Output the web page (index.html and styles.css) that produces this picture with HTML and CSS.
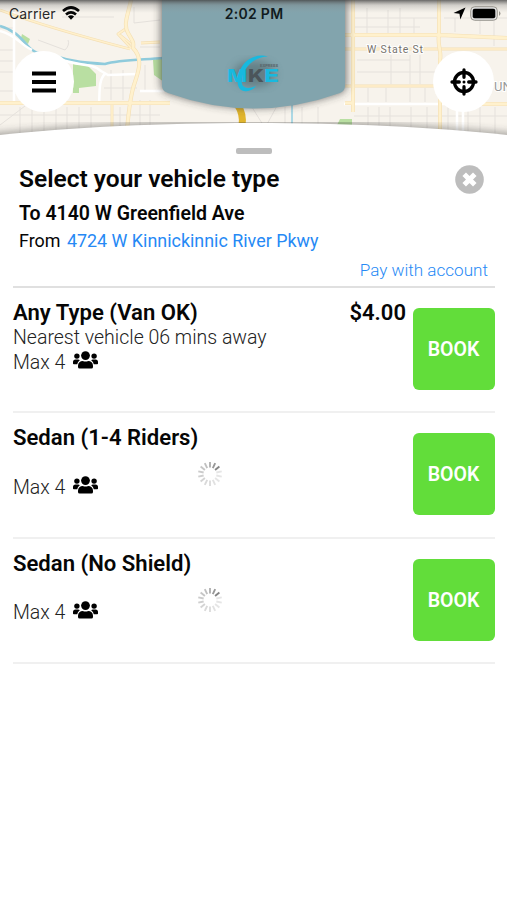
FILE: index.html
```html
<!DOCTYPE html>
<html lang="en">
<head>
<meta charset="utf-8">
<title>Select your vehicle type</title>
<link rel="stylesheet" href="styles.css">
</head>
<body>
<svg class="defs" width="0" height="0" aria-hidden="true">
  <symbol id="users" viewBox="0 0 25 18">
    <circle cx="12.5" cy="4.6" r="4.4"/>
    <circle cx="3.9" cy="5.1" r="2.7"/><circle cx="21.1" cy="5.1" r="2.7"/>
    <path d="M5 16v-1.300a4.800 4.800 0 0 1 4.800-4.800c1.800.9 3.600.9 5.400 0a4.800 4.800 0 0 1 4.800 4.800V16q0 1.600-1.600 1.600H6.600Q5 17.600 5 16z"/>
    <path d="M0 12.400V11a2.500 2.500 0 0 1 2.500-2.500H5c.8 0 1.400.3 1.800.8a6 6 0 0 0-2.600 3.900H.8a.8.8 0 0 1-.8-.8zM25 12.400V11a2.500 2.500 0 0 0-2.500-2.500H20c-.8 0-1.400.3-1.800.8a6 6 0 0 1 2.600 3.900h3.400a.8.8 0 0 0 .8-.8z"/>
  </symbol>
  <symbol id="spinner" viewBox="-13 -13 26 26">
    <g stroke="#555" stroke-width="1.9">
      <path d="M0-6.500V-12" opacity=".45"/>
      <path d="M0-6.500V-12" transform="rotate(25.700)" opacity=".6"/>
      <path d="M0-6.500V-12" transform="rotate(51.400)" opacity=".72"/>
      <path d="M0-6.500V-12" transform="rotate(77.100)" opacity=".15"/>
      <path d="M0-6.500V-12" transform="rotate(102.900)" opacity=".15"/>
      <path d="M0-6.500V-12" transform="rotate(128.600)" opacity=".15"/>
      <path d="M0-6.500V-12" transform="rotate(154.300)" opacity=".17"/>
      <path d="M0-6.500V-12" transform="rotate(180)" opacity=".2"/>
      <path d="M0-6.500V-12" transform="rotate(205.700)" opacity=".22"/>
      <path d="M0-6.500V-12" transform="rotate(231.400)" opacity=".25"/>
      <path d="M0-6.500V-12" transform="rotate(257.100)" opacity=".28"/>
      <path d="M0-6.500V-12" transform="rotate(282.900)" opacity=".3"/>
      <path d="M0-6.500V-12" transform="rotate(308.600)" opacity=".33"/>
      <path d="M0-6.500V-12" transform="rotate(334.300)" opacity=".37"/>
    </g>
  </symbol>
</svg>

<header class="hero">
  <svg class="map" viewBox="0 0 507 138" aria-hidden="true">
    <defs>
      <filter id="soft" x="-20%" y="-20%" width="140%" height="140%"><feGaussianBlur stdDeviation="4"/></filter>
      <linearGradient id="top" x2="0" y2="1"><stop stop-color="#444" stop-opacity=".8"/><stop offset=".4" stop-color="#777" stop-opacity=".3"/><stop offset="1" stop-color="#999" stop-opacity="0"/></linearGradient>
    </defs>
    <rect width="507" height="138" fill="#f7f3ec"/>
    <g fill="none" stroke="#e5e1dc" stroke-width="1">
      <path d="M0 50H15M0 61H15M0 72H15M0 91H15M0 115H160M20 107V138M32 107V138M44 107V138M56 107V138M67 107V138M79 107V138M91 107V138M120 107V138M140 100V138M150 100V138M0 125L25 106M62 17H114M38 40L65 50Q70 45 68 40M134 7V23L160 20M140 47H160M104 88H137M111 70V100M123 70V100M145 65V90M0 28H14V10"/>
      <path d="M355 18H438M355 27H420M367 8V34M388 10V34M400 8V34M414 18V34M444 18H507M455 18V32M480 8V34M494 20V46M357 60H410M391 55V84M410 55V84M420 55V84M357 72H435M368 88V102M386 88V102M410 88V102M425 88V102M368 107V138M379 107V138M390 107V138M411 107V138M427 107V138M448 107V138M468 107V138M480 107V138M495 107V138M354 116H507M250 104L265 128L278 104M285 107V128M302 107V125M318 107V125"/>
    </g>
    <g fill="#b9dfa2">
      <path d="M73 64L88 66L96 74V86L79 88V93H73zM153 60L164 57V82L154 75zM340 119H352V125H337zM22 34l8 5-2 5-7-6z"/>
    </g>
    <g fill="none" stroke-linejoin="round">
      <path d="M0 26C14 30 20 37 27 45S38 54 55 56C72 62 88 63 105 64C118 60 138 60 164 58" stroke="#8fcbdc" stroke-width="2.600"/>
      <path d="M14 12V104M0 31C16 35 21 45 32 50M60 59C80 67 91 62 101 71L108 75L137 74M105 74C98 80 100 95 99 104M140 91H164M344 104H507M457 105V138M463 105V138" stroke="#fff" stroke-width="2.500"/>
      <g>
        <path d="M0 10C35 23 72 34 130 49M131 48L118 34L127 28M120 35L131 44M141 43L160 42M112 104V130M345 49H507M345 86H435" stroke="#f4dfb4" stroke-width="2.800"/>
        <path d="M0 10C35 23 72 34 130 49M131 48L118 34L127 28M120 35L131 44M141 43L160 42M112 104V130M345 49H507M345 86H435" stroke="#fff0cc" stroke-width="1.600"/>
      </g>
      <path d="M131 0C128 15 123 24 128 33S134 42 133 48C143 58 139 70 135 82Q130 95 127 130M0 103H170M353 0V112M439 0V34C437 45 442 52 440 60V130M345 35H440L507 38M345 103H353M475 104H507" stroke="#f4dfb4" stroke-width="4"/>
      <path d="M131 0C128 15 123 24 128 33S134 42 133 48C143 58 139 70 135 82Q130 95 127 130M0 103H170M353 0V112M439 0V34C437 45 442 52 440 60V130M345 35H440L507 38M345 103H353M475 104H507" stroke="#fff1cd" stroke-width="2.800"/>
      <path d="M237 104Q244 114 242 126" stroke="#e1b52d" stroke-width="7"/>
      <path d="M292 104V126" stroke="#acd8e4" stroke-width="2"/>
    </g>
    <g class="map-text"><text x="367" y="53" textLength="56">W State St</text><text class="area" x="494" y="91">UN</text></g>
    <path d="M-9 138Q253 112 516 138" fill="none" stroke="#333" stroke-width="8" opacity=".5" filter="url(#soft)"/>
    <path d="M161-8V84Q161 91 168 93Q254 122 340 93Q346 91 346 84V-8z" fill="#333" opacity=".7" filter="url(#soft)"/>
    <path d="M162-1V86Q162 91 168 93Q254 124 340 93Q345 91 345 86V-1z" fill="#82a4ad"/>
    <rect width="507" height="13" fill="url(#top)"/>
    <path d="M0 135C145 119 362 119 507 135V138H0z" fill="#fff"/>
  </svg>
  <div class="chrome">
    <div class="status">
      <div class="carrier">Carrier
        <svg width="18" height="14" viewBox="0 0 18 14" fill="none" stroke="#050505" stroke-width="2.700"><path d="M1 5Q9-2 17 5M4 8.500Q9 4.300 14 8.500"/><path d="M5.900 10.500Q9 8.200 12.100 10.500L9 13.800z" fill="#050505" stroke="none"/></svg>
      </div>
      <div class="time">2:02 PM</div>
      <div class="power">
        <svg width="13" height="13" viewBox="0 0 13 13"><path d="M12.500.5L7.300 12.500L6.500 6.700L.5 5.900z"/></svg>
        <svg width="31" height="15" viewBox="0 0 31 15"><rect x=".7" y=".7" width="26.600" height="13.600" rx="4" fill="#ddd" stroke="#99968f"/><rect x="2.700" y="2.700" width="22.600" height="9.600" rx="2"/><path d="M29 5q3 2.500 0 5z" fill="#99968f"/></svg>
      </div>
    </div>
    <div class="controls">
      <button class="round" aria-label="Menu"><svg width="24" height="22" viewBox="0 0 24 22"><path d="M0 2.500H24M0 11H24M0 19.500H24" stroke="#000" stroke-width="4"/></svg></button>
      <svg class="logo" width="68" height="50" viewBox="0 0 68 50" role="img">
        <ellipse cx="34" cy="24" rx="21" ry="13" fill="#465b61" opacity=".5" filter="url(#soft)"/>
        <text class="tiny" x="40" y="16.500" textLength="18" lengthAdjust="spacingAndGlyphs">EXPRESS</text>
        <text class="mark" x="7" y="31.500" textLength="20" lengthAdjust="spacingAndGlyphs">M</text>
        <text class="mark dark" x="28" y="31.500" textLength="16" lengthAdjust="spacingAndGlyphs">K</text>
        <text class="mark" x="44" y="31.500" textLength="15" lengthAdjust="spacingAndGlyphs">E</text>
        <path d="M48 6.500C36 3 23 10 19 23C15 36 20 43 28 41Q33 40 36 36Q27 40 23 36C18 29 27 7 48 6.500z" fill="#18b9df"/>
      </svg>
      <button class="round" aria-label="Locate"><svg width="28" height="28" viewBox="0 0 28 28" fill="none" stroke="#000"><circle cx="14" cy="14" r="9.500" stroke-width="3.300"/><path d="M14 2V9.300M14 18.700V26M2 14H9.300M18.700 14H26" stroke-width="3.300" stroke-linecap="round"/><circle cx="14" cy="14" r="1.500" fill="#000" stroke="none"/></svg></button>
    </div>
  </div>
</header>

<main class="sheet">
  <div class="handle"></div>
  <section class="trip">
    <div class="heading"><h1>Select your vehicle type</h1>
      <button class="close" aria-label="Close"><svg width="29" height="29" viewBox="0 0 29 29"><circle cx="14.500" cy="14.500" r="14.300" fill="#bdbdbd"/><path d="M9.200 9.200L19.800 19.800M19.800 9.200L9.200 19.800" stroke="#fff" stroke-width="5"/></svg></button>
    </div>
    <p class="to">To 4140 W Greenfield Ave</p>
    <p class="from">From <a>4724 W Kinnickinnic River Pkwy</a></p>
    <a class="pay">Pay with account</a>
  </section>
  <ul class="rides">
    <li class="ride">
      <div class="info"><h2>Any Type (Van OK)</h2><p class="eta">Nearest vehicle 06 mins away</p><p class="max">Max 4 <svg class="users"><use href="#users"/></svg></p></div>
      <strong class="price">$4.00</strong>
      <button class="book">BOOK</button>
    </li>
    <li class="ride">
      <div class="info"><h2>Sedan (1-4 Riders)</h2><p class="eta wait"><svg class="spinner"><use href="#spinner"/></svg></p><p class="max">Max 4 <svg class="users"><use href="#users"/></svg></p></div>
      <button class="book">BOOK</button>
    </li>
    <li class="ride">
      <div class="info"><h2>Sedan (No Shield)</h2><p class="eta wait"><svg class="spinner"><use href="#spinner"/></svg></p><p class="max">Max 4 <svg class="users"><use href="#users"/></svg></p></div>
      <button class="book">BOOK</button>
    </li>
  </ul>
</main>
</body>
</html>
```
FILE: styles.css
```css
* { box-sizing: border-box; }
body { margin: 0; width: 507px; height: 900px; overflow: hidden; background: #fff; color: #060606; font-family: Roboto, "Liberation Sans", sans-serif; }
h1, h2, p, ul { margin: 0; padding: 0; }
button { border: 0; padding: 0; font-family: inherit; }
svg { display: block; flex: none; }
.defs { position: absolute; }
.hero { display: grid; height: 138px; }
.map, .chrome { grid-area: 1 / 1; }
.map { width: 507px; height: 138px; }
.map-text { font: 10.5px Roboto, sans-serif; fill: #77736d; stroke: #fff; stroke-width: 2px; paint-order: stroke; }
.area { font-size: 13px; fill: #999; }
.status { display: grid; grid-template-columns: 1fr auto 1fr; align-items: center; height: 26px; padding: 0 6px 0 9px; font-family: Inter, sans-serif; font-size: 14px; }
.carrier { display: flex; align-items: center; gap: 6px; letter-spacing: .1px; color: #292929; }
.time { font-weight: 600; letter-spacing: .3px; color: #101b20; margin-right: 2px; }
.power { display: flex; align-items: center; justify-content: flex-end; gap: 4px; }
.controls { display: flex; justify-content: space-between; align-items: center; padding: 25px 13px 0; }
.round { display: grid; place-items: center; width: 61px; height: 61px; border-radius: 50%; background: #fff; }
.logo { margin-top: -14px; overflow: visible; }
.mark { font: 800 18px Inter, sans-serif; fill: #18b9df; }
.dark { fill: #4b555a; }
.tiny { font: 700 4px Inter, sans-serif; fill: #59666a; }
.sheet { padding: 10px 12px 0 13px; }
.handle { width: 36px; height: 6px; margin: 0 auto; border-radius: 2px; background: #bdbdbd; }
.trip { display: flex; flex-direction: column; height: 134px; padding: 8px 7px 0 6px; border-bottom: 2px solid #e0e0e0; }
.heading { display: flex; justify-content: space-between; padding-right: 4px; height: 36px; }
h1 { font-size: 24.5px; line-height: 34px; font-weight: 600; }
.close { margin-top: 3px; width: 29px; height: 29px; background: none; }
.to { font-size: 19.5px; line-height: 31px; font-weight: 600; }
.from { font-size: 17.9px; line-height: 24px; }
.from a { margin-left: 2px; color: #2689f5; }
.pay { align-self: flex-end; margin-top: 5px; font-size: 17.1px; line-height: 24px; font-weight: 300; color: #2689f5; }
.rides { list-style: none; }
.ride { display: flex; height: 125.3px; border-bottom: 2px solid #f0f0f0; padding-top: 12px; }
.info { flex: 1; }
h2 { font-size: 22.1px; line-height: 25px; font-weight: 600; }
.eta, .max { height: 24.5px; font-size: 19.5px; line-height: 25px; font-weight: 300; color: #222; }
.max { display: flex; gap: 8px; }
.users { width: 25px; height: 18px; margin-top: 1px; fill: #000; }
.price { margin-right: 7px; font-size: 22px; line-height: 25px; font-weight: 600; }
.book { width: 82px; height: 82px; margin-top: 8px; padding: 1px 1px 0 0; border-radius: 6px; background: #62dd3a; color: #fff; font-size: 19.5px; font-weight: 600; }
.wait { padding: 11px 0 0 184px; }
.spinner { width: 26px; height: 26px; }
```
